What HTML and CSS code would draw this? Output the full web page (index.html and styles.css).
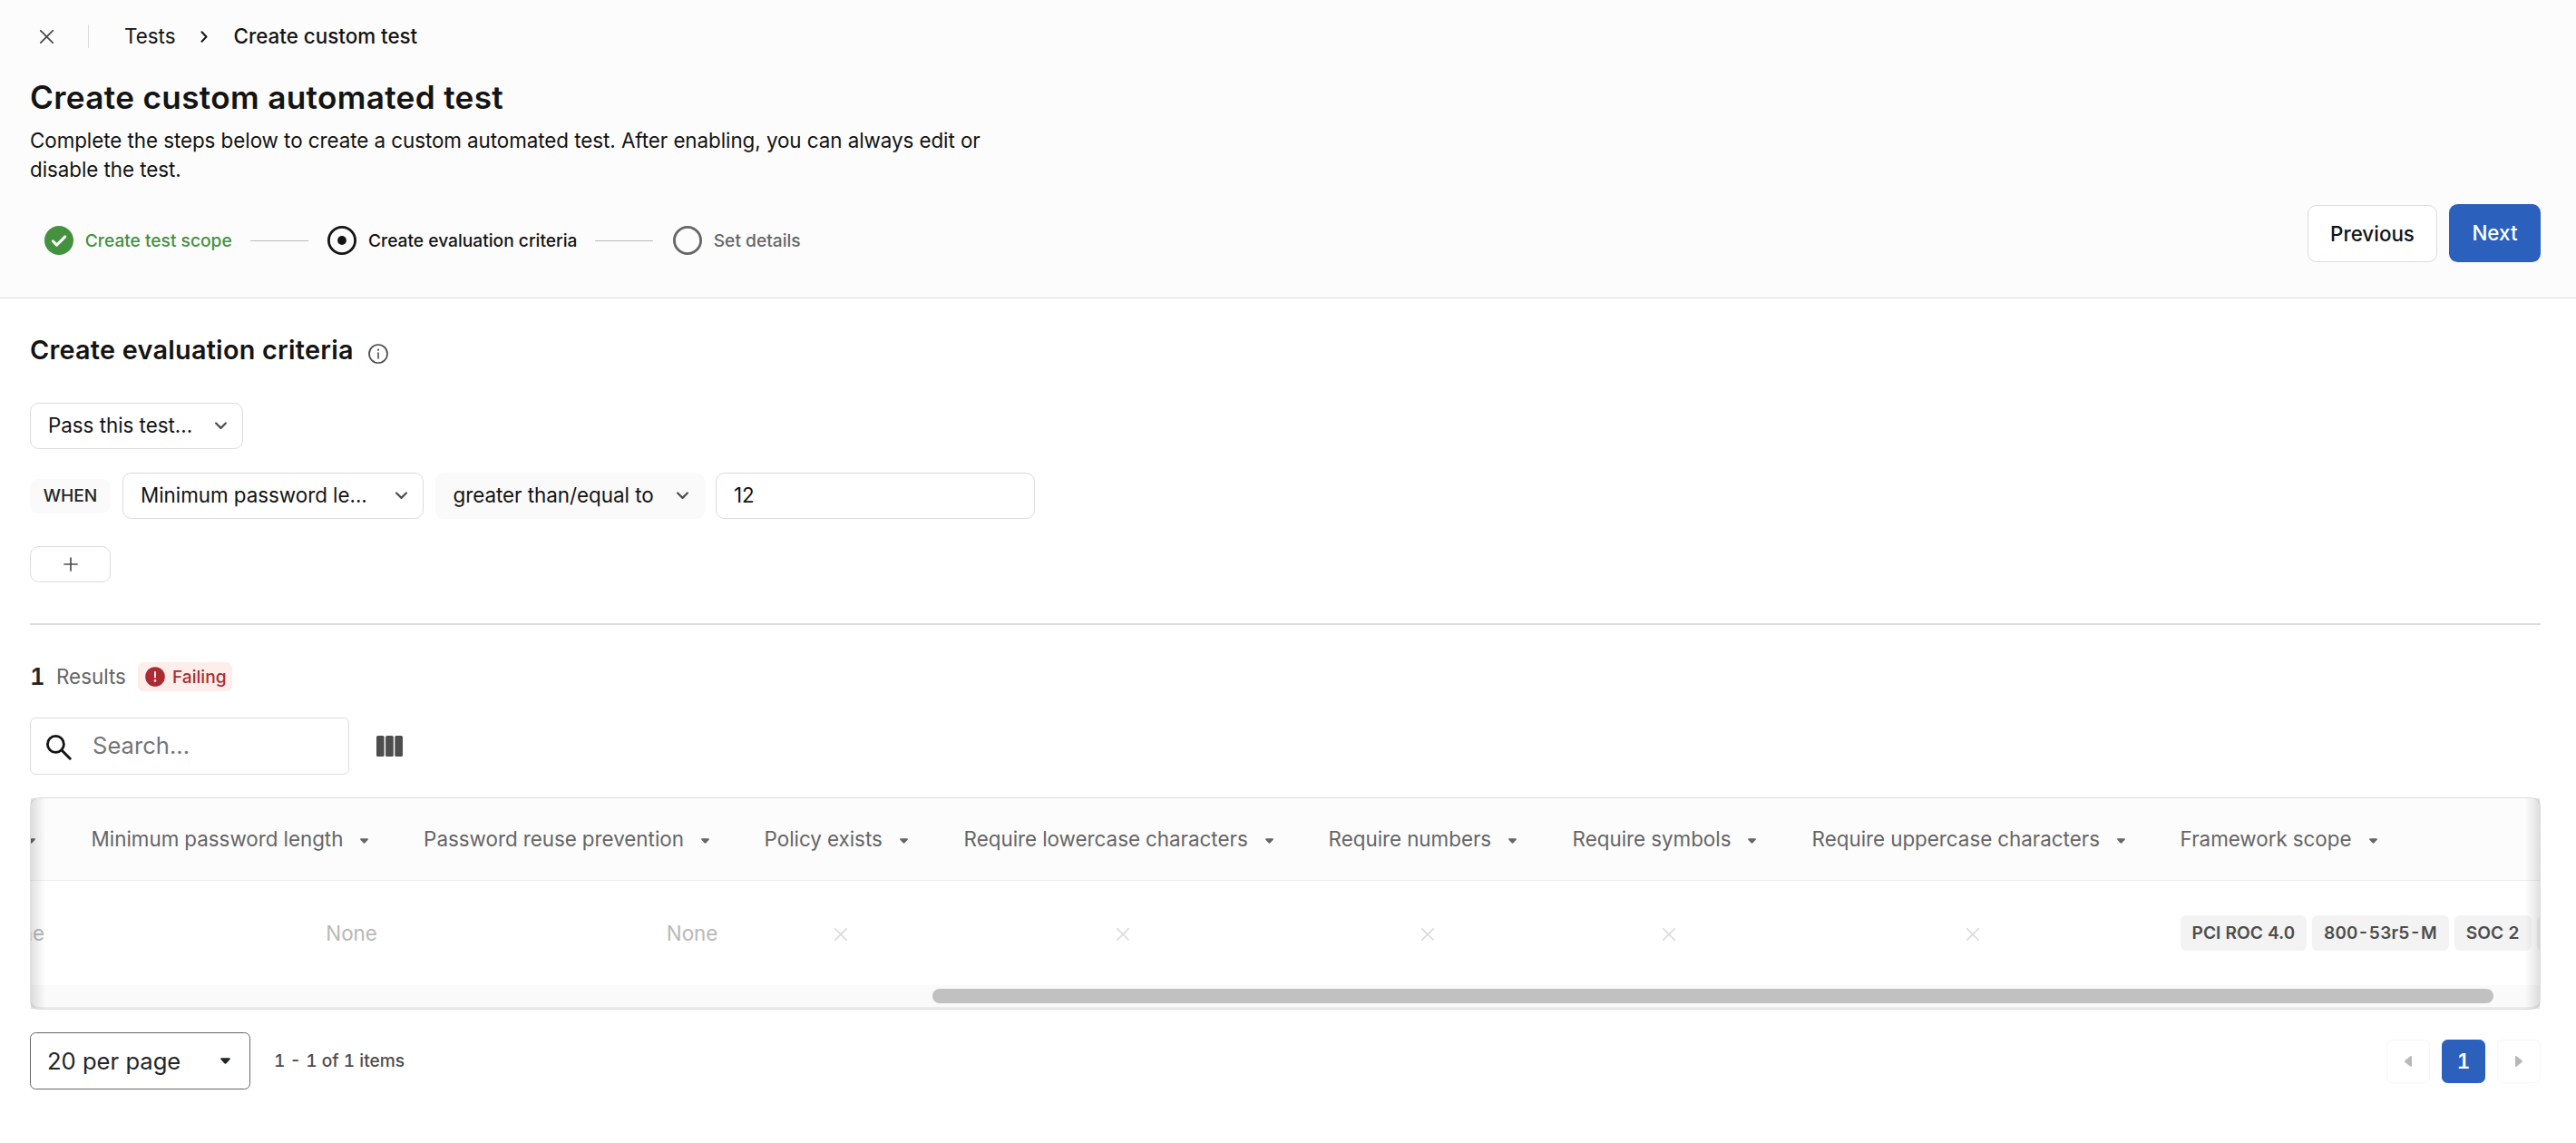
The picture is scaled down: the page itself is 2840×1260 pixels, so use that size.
FILE: index.html
```html
<!DOCTYPE html>
<html lang="en">
<head>
    <meta charset="UTF-8">
    <meta name="viewport" content="width=device-width, initial-scale=1.0">
    <title>Create custom test</title>
    <link rel="stylesheet" href="styles.css">
</head>
<body>
    <svg class="sprite">
        <symbol id="chevron" viewBox="0 0 12 8"><path d="M1 1.2l5 5 5-5" fill="none" stroke="currentColor" stroke-width="2" stroke-linecap="round" stroke-linejoin="round"/></symbol>
        <symbol id="caret" viewBox="0 0 10 6"><path d="M1 0h8c.9 0 1.2.9.6 1.5L6 5.5c-.6.6-1.4.6-2 0L.4 1.5C-.2.9.1 0 1 0z" fill="currentColor"/></symbol>
        <symbol id="cross" viewBox="0 0 14 14"><path d="M.8.8l12.4 12.4M13.2.8L.8 13.2" fill="none" stroke="currentColor" stroke-width="1.7" stroke-linecap="round"/></symbol>
    </svg>
    <header class="header">
        <nav class="crumbs">
            <a href="javascript:;" class="close"><svg width="15" height="15"><use href="#cross"/></svg></a>
            <span class="bar"></span>
            <a href="javascript:;" class="crumb">Tests</a>
            <svg class="sep" width="8" height="13" viewBox="0 0 8 13"><path d="M1.5 1.2l5 5.3-5 5.3" fill="none" stroke="currentColor" stroke-width="2" stroke-linecap="round" stroke-linejoin="round"/></svg>
            <span class="crumb current">Create custom test</span>
        </nav>
        <h1>Create custom automated test</h1>
        <p class="desc">Complete the steps below to create a custom automated test. After enabling, you can always edit or disable the test.</p>
        <div class="headerBottom">
            <ul class="steps">
                <li class="done">
                    <svg width="32" height="32" viewBox="0 0 32 32"><circle cx="16" cy="16" r="16" fill="currentColor"/><path d="M9.3 16.9l4.3 4.2 9.2-9.2" fill="none" stroke="#fff" stroke-width="3" stroke-linecap="round" stroke-linejoin="round"/></svg>
                    <span>Create test scope</span>
                </li>
                <li class="line"></li>
                <li class="active">
                    <svg width="32" height="32" viewBox="0 0 32 32"><circle cx="16" cy="16" r="14.6" fill="none" stroke="currentColor" stroke-width="2.8"/><circle cx="16" cy="16" r="4.9" fill="currentColor"/></svg>
                    <span>Create evaluation criteria</span>
                </li>
                <li class="line"></li>
                <li>
                    <svg width="32" height="32" viewBox="0 0 32 32"><circle cx="16" cy="16" r="14.6" fill="none" stroke="currentColor" stroke-width="2.8"/></svg>
                    <span>Set details</span>
                </li>
            </ul>
            <div class="actions">
                <button class="btn">Previous</button>
                <button class="btn primary">Next</button>
            </div>
        </div>
    </header>
    <main class="main">
        <div class="sectionTitle">
            <h2>Create evaluation criteria</h2>
            <svg width="22" height="22" viewBox="0 0 22 22"><circle cx="11" cy="11" r="10" fill="none" stroke="currentColor" stroke-width="1.7"/><path d="M11 10v6" stroke="currentColor" stroke-width="1.6" stroke-linecap="round"/><circle cx="11" cy="6.7" r="1.1" fill="currentColor"/></svg>
        </div>
        <div class="select pass"><span>Pass this test...</span><svg width="13" height="9"><use href="#chevron"/></svg></div>
        <div class="rule">
            <span class="when">WHEN</span>
            <div class="select field"><span>Minimum password le...</span><svg width="13" height="9"><use href="#chevron"/></svg></div>
            <div class="select operator"><span>greater than/equal to</span><svg width="13" height="9"><use href="#chevron"/></svg></div>
            <input class="value" type="text" value="12">
        </div>
        <button class="add"><svg width="16" height="16" viewBox="0 0 16 16"><path d="M8 1v14M1 8h14" stroke="currentColor" stroke-width="1.7" stroke-linecap="round"/></svg></button>
        <hr>
        <div class="results">
            <b>1</b>
            <span class="label">Results</span>
            <span class="failing">
                <svg width="22" height="22" viewBox="0 0 22 22"><circle cx="11" cy="11" r="10.8" fill="currentColor"/><path d="M11 6v5.6" stroke="#fceeea" stroke-width="2" stroke-linecap="round"/><circle cx="11" cy="15.4" r="1.3" fill="#fceeea"/></svg>
                Failing
            </span>
        </div>
        <div class="tools">
            <label class="search">
                <svg width="28" height="28" viewBox="0 0 28 28"><circle cx="10.4" cy="10.4" r="9" fill="none" stroke="currentColor" stroke-width="2.8"/><path d="M17 17l9.2 9.2" stroke="currentColor" stroke-width="3" stroke-linecap="round"/></svg>
                <input type="text" placeholder="Search...">
            </label>
            <svg class="columns" width="29" height="23" viewBox="0 0 29 23"><rect width="8.6" height="23" rx="1.6"/><rect x="10.1" width="8.7" height="23" rx="1.6"/><rect x="20.3" width="8.7" height="23" rx="1.6"/></svg>
        </div>
        <div class="tableWrap">
            <div class="row head">
                <div class="cell c0"><i><svg width="9" height="6"><use href="#caret"/></svg></i></div>
                <div class="cell c1"><span>Minimum password length</span><i><svg width="9" height="6"><use href="#caret"/></svg></i></div>
                <div class="cell c2"><span>Password reuse prevention</span><i><svg width="9" height="6"><use href="#caret"/></svg></i></div>
                <div class="cell c3"><span>Policy exists</span><i><svg width="9" height="6"><use href="#caret"/></svg></i></div>
                <div class="cell c4"><span>Require lowercase characters</span><i><svg width="9" height="6"><use href="#caret"/></svg></i></div>
                <div class="cell c5"><span>Require numbers</span><i><svg width="9" height="6"><use href="#caret"/></svg></i></div>
                <div class="cell c6"><span>Require symbols</span><i><svg width="9" height="6"><use href="#caret"/></svg></i></div>
                <div class="cell c7"><span>Require uppercase characters</span><i><svg width="9" height="6"><use href="#caret"/></svg></i></div>
                <div class="cell c8"><span>Framework scope</span><i><svg width="9" height="6"><use href="#caret"/></svg></i></div>
            </div>
            <div class="row body">
                <div class="cell c0 num">None</div>
                <div class="cell c1 num">None</div>
                <div class="cell c2 num">None</div>
                <div class="cell c3 bool"><svg width="14" height="14"><use href="#cross"/></svg></div>
                <div class="cell c4 bool"><svg width="14" height="14"><use href="#cross"/></svg></div>
                <div class="cell c5 bool"><svg width="14" height="14"><use href="#cross"/></svg></div>
                <div class="cell c6 bool"><svg width="14" height="14"><use href="#cross"/></svg></div>
                <div class="cell c7 bool"><svg width="14" height="14"><use href="#cross"/></svg></div>
                <div class="cell c8 tags"><span>PCI ROC 4.0</span><span>800-53r5-M</span><span>SOC 2</span><span></span></div>
            </div>
            <div class="scrollbar"><div class="thumb"></div></div>
            <div class="shade left"></div>
            <div class="shade right"></div>
        </div>
        <div class="footer">
            <div class="perPage"><span>20 per page</span><svg width="11" height="7"><use href="#caret"/></svg></div>
            <span class="count">1 - 1 of 1 items</span>
            <div class="pager">
                <a href="javascript:;"><svg width="8" height="12" viewBox="0 0 8 12"><path d="M8 1.2v9.6c0 1.1-1 1.5-1.8.8L.6 7c-.7-.6-.7-1.4 0-2L6.2.4C7-.3 8 .1 8 1.2z" fill="currentColor"/></svg></a>
                <a href="javascript:;" class="on">1</a>
                <a href="javascript:;"><svg width="8" height="12" viewBox="0 0 8 12"><path d="M0 1.2v9.6c0 1.1 1 1.5 1.8.8L7.4 7c.7-.6.7-1.4 0-2L1.8.4C1-.3 0 .1 0 1.2z" fill="currentColor"/></svg></a>
            </div>
        </div>
    </main>
</body>
</html>
```
FILE: styles.css
```css
*{
    margin: 0;
    padding: 0;
    box-sizing: border-box;
}
ul{
    list-style: none;
}
a{
    text-decoration: none;
    color: inherit;
}
svg{
    display: block;
    flex: none;
}
input,button{
    font: inherit;
    color: inherit;
    outline: none;
}
body{
    background: #fff;
    color: #141414;
    font-family: Inter, "Liberation Sans", sans-serif;
    font-size: 22.4px;
    line-height: 32px;
}
.sprite{
    display: none;
}

/* header */
.header{
    height: 329px;
    padding: 24px 39px 0 33px;
    background: #fcfcfc;
    border-bottom: 1px solid #dcdcdc;
}
.crumbs{
    display: flex;
    align-items: center;
    height: 32px;
}
.close{
    margin-left: 11px;
    color: #4d4d4d;
}
.bar{
    width: 1px;
    height: 26px;
    margin: 0 39px 0 38px;
    background: #dcdcdc;
}
.sep{
    margin: 0 29px 0 27px;
}
.current{
    font-weight: 500;
}
h1{
    margin-top: 29px;
    font-size: 35.2px;
    line-height: 45px;
    font-weight: 600;
    letter-spacing: 0.32px;
}
.desc{
    width: 1060px;
    margin-top: 9px;
    letter-spacing: -0.06px;
}
.headerBottom{
    display: flex;
    justify-content: space-between;
    align-items: flex-end;
    margin-top: 22px;
}
.steps{
    display: flex;
    align-items: center;
    height: 48px;
    padding-left: 16px;
    font-size: 19.2px;
    font-weight: 500;
    color: #666;
}
.steps li{
    display: flex;
    align-items: center;
    gap: 12.8px;
}
.steps .line{
    width: 64px;
    height: 1px;
    margin: 0 21.5px 0 20px;
    background: #bababa;
}
.steps .done{
    color: #449140;
}
.steps .active{
    color: #141414;
}
.actions{
    display: flex;
    align-items: flex-end;
    gap: 13px;
}
.btn{
    width: 143px;
    height: 63px;
    background: #fff;
    border: 1px solid #dcdcdc;
    border-radius: 9.6px;
    font-weight: 500;
}
.btn.primary{
    width: 101px;
    height: 64px;
    background: #2b60bd;
    border: 0;
    color: #fff;
}

/* criteria */
.main{
    padding: 37px 39px 0 33px;
}
.sectionTitle{
    display: flex;
    align-items: center;
    gap: 16px;
    height: 38px;
    color: #4d4d4d;
}
.sectionTitle svg{
    margin-top: 9px;
}
h2{
    padding-top: 1px;
    font-size: 28.8px;
    line-height: 38px;
    font-weight: 600;
    letter-spacing: 0.25px;
    color: #141414;
}
.select{
    display: flex;
    align-items: center;
    justify-content: space-between;
    height: 51px;
    padding: 0 17px 0 19px;
    border: 1px solid #dcdcdc;
    border-radius: 9.6px;
    background: #fff;
    letter-spacing: -0.03px;
}
.select span{
    padding-bottom: 1px;
}
.select svg{
    color: #4d4d4d;
}
.pass{
    width: 235px;
    margin-top: 40px;
}
.rule{
    display: flex;
    align-items: center;
    height: 51px;
    margin-top: 26px;
}
.when{
    width: 89px;
    height: 38px;
    line-height: 37px;
    margin-right: 13px;
    border-radius: 9.6px;
    background: #fafafa;
    font-size: 19.2px;
    font-weight: 500;
    color: #212529;
    text-align: center;
}
.field{
    width: 332px;
    margin-right: 13px;
}
.operator{
    width: 297px;
    margin-right: 12px;
    padding-left: 18.5px;
    background: #fafafa;
    border-color: #fafafa;
}
.value{
    width: 352px;
    height: 51px;
    padding: 0 19px 2px;
    border: 1px solid #dcdcdc;
    border-radius: 9.6px;
}
.add{
    display: flex;
    align-items: center;
    justify-content: center;
    width: 89px;
    height: 40px;
    margin-top: 30px;
    border: 1px solid #dcdcdc;
    border-radius: 9.6px;
    background: #fff;
    color: #4d4d4d;
}
hr{
    height: 2px;
    margin-top: 45px;
    border: 0;
    background: #dcdcdc;
}

/* results */
.results{
    display: flex;
    align-items: center;
    height: 32px;
    margin-top: 41px;
}
.results b{
    width: 17px;
    font-size: 25.6px;
    font-weight: 600;
    font-variant-numeric: tabular-nums;
    color: #212529;
}
.label{
    margin: 0 13px 0 12px;
    color: #666;
}
.failing{
    display: flex;
    align-items: center;
    gap: 8px;
    width: 104px;
    height: 32px;
    padding-left: 8px;
    border-radius: 6.4px;
    background: #fceeea;
    color: #ac2a33;
    font-size: 19.2px;
    font-weight: 500;
}
.tools{
    display: flex;
    align-items: center;
    gap: 30px;
    margin-top: 29px;
}
.search{
    display: flex;
    align-items: center;
    width: 352px;
    height: 63px;
    padding-left: 17px;
    border: 1px solid #dcdcdc;
    border-radius: 6.4px;
}
.search svg{
    margin-top: 2px;
}
.search input{
    width: 260px;
    margin-left: 23px;
    padding-bottom: 2px;
    border: 0;
    font-size: 25.6px;
}
.search input::placeholder{
    color: #757575;
}
.columns{
    fill: #4d4d4d;
}

/* table */
.tableWrap{
    position: relative;
    height: 234px;
    margin-top: 25px;
    border: 1px solid #dcdcdc;
    border-radius: 9.6px;
    font-variant-numeric: tabular-nums;
}
.row{
    display: flex;
    overflow: hidden;
}
.head{
    height: 91px;
    background: #fcfcfc;
    border-bottom: 1px solid #eee;
    border-radius: 9px 9px 0 0;
    letter-spacing: -0.01px;
    color: #666;
}
.body{
    height: 115px;
    color: #b8b8b8;
}
.cell{
    display: flex;
    flex: none;
    align-items: center;
    padding-left: 25.6px;
    padding-right: 25.6px;
    white-space: nowrap;
}
.cell i{
    display: flex;
    justify-content: center;
    width: 26px;
    margin: 4px 0 0 10.5px;
}
.c0{
    width: 41px;
    padding-left: 0;
    padding-right: 26px;
    justify-content: flex-end;
}
.head .c0{
    justify-content: flex-start;
}
.head .c0 i{
    width: 9px;
    margin-left: -4px;
}
.c1{
    width: 366.5px;
}
.c2{
    width: 375.5px;
}
.c3{
    width: 220px;
}
.c4{
    width: 402px;
}
.c5{
    width: 269px;
}
.c6{
    width: 264px;
}
.c7{
    width: 406px;
}
.c8{
    width: 460px;
}
.num{
    justify-content: flex-end;
}
.bool{
    justify-content: center;
    padding-top: 3px;
    color: #dcdcdc;
}
.tags{
    gap: 6px;
}
.tags span{
    flex: none;
    min-width: 60px;
    height: 39px;
    padding: 0 13px;
    border-radius: 6.4px;
    background: #f3f3f3;
    color: #4d4d4d;
    font-size: 19.2px;
    line-height: 39px;
    font-weight: 600;
}
.scrollbar{
    height: 26px;
    padding: 4px 51px 0 994px;
    background: #fafafa;
    border-bottom: 2px solid #ebebeb;
    border-radius: 0 0 9px 9px;
}
.thumb{
    height: 16px;
    border-radius: 8px;
    background: #c1c1c1;
}
.shade{
    position: absolute;
    top: 0;
    bottom: 0;
    width: 16px;
}
.shade.left{
    left: 0;
    background: linear-gradient(to right, rgba(0,0,0,.12), rgba(0,0,0,0));
}
.shade.right{
    right: 0;
    background: linear-gradient(to left, rgba(0,0,0,.12), rgba(0,0,0,0));
}

/* footer */
.footer{
    display: flex;
    align-items: center;
    margin-top: 25px;
    font-variant-numeric: tabular-nums;
}
.perPage{
    display: flex;
    align-items: center;
    justify-content: space-between;
    width: 243px;
    height: 63px;
    padding: 0 21px 0 18px;
    border: 1px solid #666;
    border-radius: 6.4px;
    font-size: 25.6px;
    font-variant-numeric: normal;
    color: #212529;
}
.count{
    margin-left: 26px;
    padding-bottom: 1px;
    font-size: 19.2px;
    font-weight: 500;
    color: #4d4d4d;
}
.pager{
    display: flex;
    gap: 13px;
    margin-left: auto;
}
.pager a{
    display: flex;
    align-items: center;
    justify-content: center;
    width: 48px;
    height: 48px;
    border: 1px solid #f7f7f7;
    border-radius: 6.4px;
    color: #b8b8b8;
}
.pager .on{
    background: #2b60bd;
    border-color: #2b60bd;
    color: #fff;
    font-weight: 600;
}
```
